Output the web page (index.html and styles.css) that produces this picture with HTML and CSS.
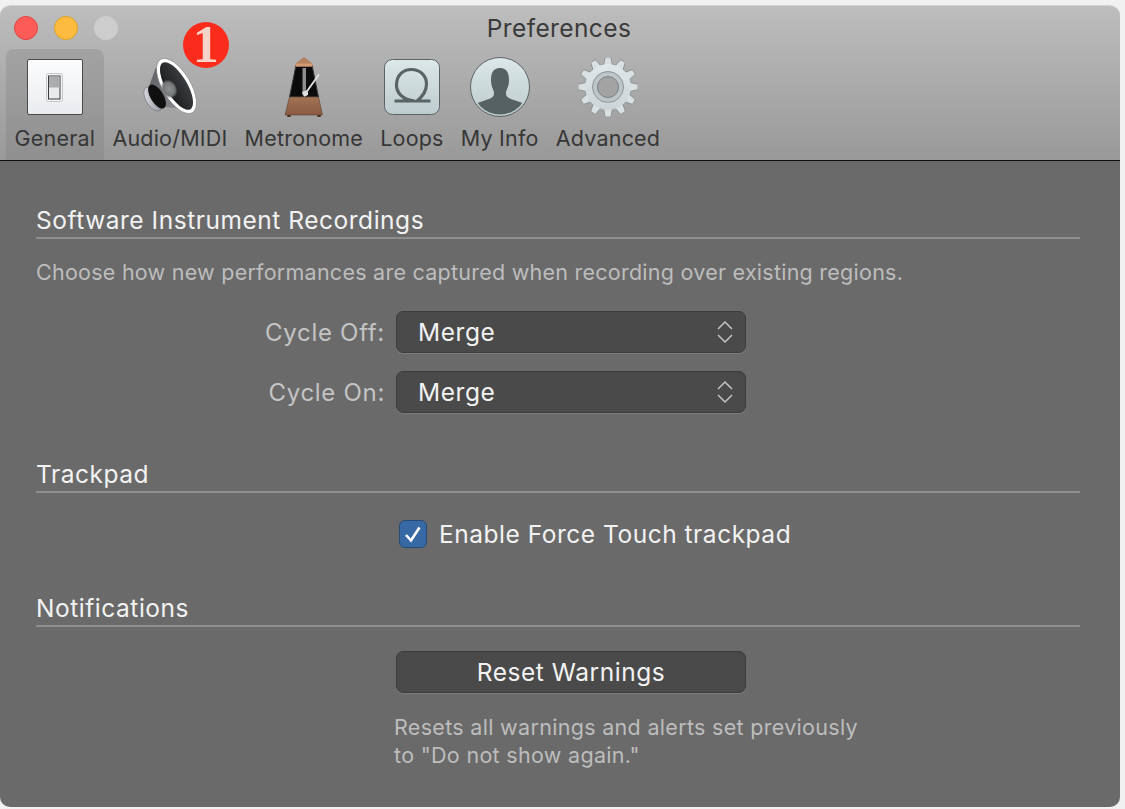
FILE: index.html
```html
<!DOCTYPE html>
<html lang="en">
<head>
    <meta charset="UTF-8">
    <title>Preferences</title>
    <link rel="stylesheet" href="styles.css">
</head>
<body>
<div class="window">
    <div class="toolbar">
        <div class="titlebar">
            <div class="lights">
                <span class="light red"></span>
                <span class="light yellow"></span>
                <span class="light gray"></span>
            </div>
            <div class="title">Preferences</div>
        </div>
        <div class="tabs">
            <div class="tab chosen">
                <svg class="icon" width="60" height="60" viewBox="0 0 60 60">
                    <defs>
                        <linearGradient id="paper" x1="0" y1="0" x2="0" y2="1">
                            <stop offset="0" stop-color="#fbfcfd"/>
                            <stop offset="1" stop-color="#e9ecef"/>
                        </linearGradient>
                    </defs>
                    <rect x="2.5" y="2.5" width="55" height="55" rx="1.5" fill="url(#paper)" stroke="#4a4a4a"/>
                    <rect x="21.5" y="16.5" width="16" height="28" rx="2" fill="#f4f4f4" stroke="#c4c6c8"/>
                    <rect x="23.5" y="19" width="11.500" height="23" fill="#e9eaeb" stroke="#3a3a3a"/>
                    <rect x="24" y="19.5" width="10.500" height="11" fill="#a9adad"/>
                </svg>
                <span class="tab-label">General</span>
            </div>
            <div class="tab">
                <svg class="icon" width="60" height="60" viewBox="0 0 60 60">
                    <defs>
                        <linearGradient id="magnet" x1="0" y1="0" x2="1" y2="1">
                            <stop offset="0" stop-color="#e6e7ee"/>
                            <stop offset="1" stop-color="#7f808a"/>
                        </linearGradient>
                        <linearGradient id="back" x1="0" y1="0" x2="1" y2="1">
                            <stop offset="0" stop-color="#5e5f64"/>
                            <stop offset="1" stop-color="#8b8c92"/>
                        </linearGradient>
                        <linearGradient id="cone" x1="0" y1="0" x2="1" y2="0">
                            <stop offset="0" stop-color="#1c1d1f"/>
                            <stop offset="1" stop-color="#3a3d40"/>
                        </linearGradient>
                        <radialGradient id="cap" cx="0.5" cy="0.5" r="0.5">
                            <stop offset="0" stop-color="#8f9393"/>
                            <stop offset="0.7" stop-color="#727677"/>
                            <stop offset="1" stop-color="#727677" stop-opacity="0"/>
                        </radialGradient>
                    </defs>
                    <g transform="translate(1.500 0)">
                        <path d="M14.500 10 L8 28 L24 50 L41 52 Z" fill="url(#back)"/>
                        <ellipse cx="11.500" cy="42" rx="7" ry="13.500" transform="rotate(-31 11.500 42)" fill="url(#magnet)" stroke="#66666c" stroke-width="0.5"/>
                        <ellipse cx="15.500" cy="39.500" rx="6.500" ry="13.500" transform="rotate(-31 15.500 39.500)" fill="#101011"/>
                        <ellipse cx="35" cy="29" rx="14" ry="31" transform="rotate(-31 35 29)" fill="#fff" stroke="#77787a" stroke-width="0.5"/>
                        <ellipse cx="35" cy="29" rx="10.500" ry="27" transform="rotate(-31 35 29)" fill="url(#cone)"/>
                        <ellipse cx="27.500" cy="32" rx="8" ry="10" transform="rotate(-31 27.500 32)" fill="url(#cap)"/>
                    </g>
                </svg>
                <span class="tab-label">Audio/MIDI</span>
                <span class="badge">1</span>
            </div>
            <div class="tab">
                <svg class="icon" width="60" height="60" viewBox="0 0 60 60">
                    <defs>
                        <linearGradient id="wood" x1="0" y1="0" x2="0" y2="1">
                            <stop offset="0" stop-color="#a37355"/>
                            <stop offset="1" stop-color="#8a5a42"/>
                        </linearGradient>
                    </defs>
                    <path d="M22 8 L38 8 L44.500 40 L15.500 40 Z" fill="#0b0b0b" stroke="#3b3b3b" stroke-width="1"/>
                    <path d="M21 7 L30 0 L39 7 L38 9.500 L22 9.500 Z" fill="#b5805f"/>
                    <path d="M21 6.500 L39 6.500 L38 9.500 L22 9.500 Z" fill="#d39a75"/>
                    <rect x="28.500" y="11" width="3.500" height="27" fill="#8e8e8e"/>
                    <path d="M31 37 L45 17.500" stroke="#e4e4e4" stroke-width="1.800"/>
                    <path d="M28 35 L34 33 L34 38 L30 40 Z" fill="#e0e0e0"/>
                    <path d="M15.500 40 L44.500 40 L48.500 58 L11 58 Z" fill="url(#wood)" stroke="#5d4030" stroke-width="0.6"/>
                    <rect x="13" y="58" width="4" height="2" rx="1" fill="#4a3428"/>
                    <rect x="43" y="58" width="4" height="2" rx="1" fill="#4a3428"/>
                </svg>
                <span class="tab-label">Metronome</span>
            </div>
            <div class="tab">
                <svg class="icon" width="60" height="60" viewBox="0 0 60 60">
                    <defs>
                        <linearGradient id="tile" x1="0" y1="0" x2="0" y2="1">
                            <stop offset="0" stop-color="#dce8ea"/>
                            <stop offset="1" stop-color="#bccbcd"/>
                        </linearGradient>
                    </defs>
                    <rect x="2.500" y="2.500" width="55" height="55" rx="8" fill="url(#tile)" stroke="#5c6264"/>
                    <path d="M12.500 44 H33 C20 43 14 35 14.500 27 C15 18 21 12.500 29.500 12.500 C38 12.500 44.500 18.500 44.500 27 C44.500 34 40 40 35 44 H48.500" fill="none" stroke="#596466" stroke-width="3.200"/>
                </svg>
                <span class="tab-label">Loops</span>
            </div>
            <div class="tab">
                <svg class="icon" width="60" height="60" viewBox="0 0 60 60">
                    <defs>
                        <clipPath id="disc"><circle cx="30" cy="30" r="27.500"/></clipPath>
                    </defs>
                    <circle cx="30" cy="30" r="29.500" fill="url(#tile)" stroke="#5c6264"/>
                    <path clip-path="url(#disc)" d="M30 11 C37 11 39 16 39 23 C39 30 36 33 36 36 C36 40 38 41 44 43 C50 45 54 46 56 50 L50 60 L10 60 L4 50 C6 46 10 45 16 43 C22 41 24 40 24 36 C24 33 21 30 21 23 C21 16 23 11 30 11 Z" fill="#566162"/>
                </svg>
                <span class="tab-label">My Info</span>
            </div>
            <div class="tab">
                <svg class="icon" width="60" height="60" viewBox="0 0 60 60">
                    <defs>
                        <linearGradient id="steel" x1="0" y1="0" x2="0" y2="60" gradientUnits="userSpaceOnUse">
                            <stop offset="0" stop-color="#e4eaec"/>
                            <stop offset="1" stop-color="#c8d1d4"/>
                        </linearGradient>
                        <path id="tooth" d="M25.500 9 L27 1 Q27.200 0 28 0 H32 Q32.800 0 33 1 L34.500 9 Z" fill="#d8e0e2" stroke="#878e90" stroke-width="0.8"/>
                    </defs>
                    <circle cx="30" cy="30" r="23.400" fill="#878e90"/>
                    <use href="#tooth"/>
                    <use href="#tooth" transform="rotate(30 30 30)"/>
                    <use href="#tooth" transform="rotate(60 30 30)"/>
                    <use href="#tooth" transform="rotate(90 30 30)"/>
                    <use href="#tooth" transform="rotate(120 30 30)"/>
                    <use href="#tooth" transform="rotate(150 30 30)"/>
                    <use href="#tooth" transform="rotate(180 30 30)"/>
                    <use href="#tooth" transform="rotate(210 30 30)"/>
                    <use href="#tooth" transform="rotate(240 30 30)"/>
                    <use href="#tooth" transform="rotate(270 30 30)"/>
                    <use href="#tooth" transform="rotate(300 30 30)"/>
                    <use href="#tooth" transform="rotate(330 30 30)"/>
                    <circle cx="30" cy="30" r="23" fill="url(#steel)"/>
                    <circle cx="30" cy="30" r="15.500" fill="#bcc5c8" stroke="#8f9699" stroke-width="1"/>
                    <circle cx="30" cy="30" r="10.500" fill="#a3a3a3" stroke="#7b8183" stroke-width="1"/>
                </svg>
                <span class="tab-label">Advanced</span>
            </div>
        </div>
    </div>

    <div class="content">
        <div class="section recordings">
            <div class="section-head">Software Instrument Recordings</div>
            <p class="desc">Choose how new performances are captured when recording over existing regions.</p>
            <div class="form-row first">
                <label class="form-label">Cycle Off:</label>
                <div class="select">
                    <span>Merge</span>
                    <svg width="18" height="26" viewBox="0 0 18 26"><path d="M2 10 L9 3 L16 10 M2 16 L9 23 L16 16" fill="none" stroke="#c4c4c4" stroke-width="1.500"/></svg>
                </div>
            </div>
            <div class="form-row">
                <label class="form-label">Cycle On:</label>
                <div class="select">
                    <span>Merge</span>
                    <svg width="18" height="26" viewBox="0 0 18 26"><path d="M2 10 L9 3 L16 10 M2 16 L9 23 L16 16" fill="none" stroke="#c4c4c4" stroke-width="1.500"/></svg>
                </div>
            </div>
        </div>

        <div class="section trackpad">
            <div class="section-head">Trackpad</div>
            <div class="check-row">
                <span class="checkbox">
                    <svg width="28" height="28" viewBox="0 0 28 28"><path d="M7 15 L12 20.500 L20.500 7.500" fill="none" stroke="#fff" stroke-width="2.600"/></svg>
                </span>
                <span class="check-label">Enable Force Touch trackpad</span>
            </div>
        </div>

        <div class="section notifications">
            <div class="section-head">Notifications</div>
            <div class="button">Reset Warnings</div>
            <p class="help">Resets all warnings and alerts set previously<br>to "Do not show again."</p>
        </div>
    </div>
</div>
</body>
</html>
```

FILE: styles.css
```css
* {
    padding: 0;
    margin: 0;
    box-sizing: border-box;
}

body {
    background-color: #f1f1f1;
    font-family: Inter, "Liberation Sans", sans-serif;
}

.window {
    width: 1120px;
    height: 802px;
    margin-top: 5px;
    border-radius: 10px;
    overflow: hidden;
    display: flex;
    flex-direction: column;
    border-top: 1px solid #d4d4d4;
}

.toolbar {
    height: 155px;
    background: linear-gradient(#bdbdbd, #999999);
    border-bottom: 1px solid #111;
    display: flex;
    flex-direction: column;
}

.titlebar {
    display: grid;
    grid-template-columns: 1fr auto 1fr;
    align-items: center;
    height: 43px;
    padding: 0 16px 0 14px;
}

.lights {
    display: flex;
    gap: 16px;
}

.light {
    width: 24px;
    height: 24px;
    border-radius: 50%;
}

.red {
    background-color: #fc5b57;
    border: 1px solid #e0443e;
}

.yellow {
    background-color: #fdbc40;
    border: 1px solid #dea123;
}

.gray {
    background-color: #cdcdcd;
}

.title {
    font-size: 24.500px;
    letter-spacing: 0.4px;
    color: #3a3a3a;
}

.tabs {
    display: flex;
    flex: 1;
    padding-left: 6px;
}

.tab {
    position: relative;
    display: flex;
    flex-direction: column;
    align-items: center;
    padding: 8px 8.600px 0;
}

.tab.chosen {
    background: linear-gradient(#a3a3a3, #8f8f8f);
    border-radius: 8px 8px 0 0;
}

.icon {
    display: block;
}

.tab-label {
    margin-top: 7px;
    font-size: 21.500px;
    letter-spacing: 0.2px;
    line-height: 28px;
    color: #363636;
    white-space: nowrap;
}

.badge {
    position: absolute;
    top: -27px;
    left: 79px;
    width: 46px;
    height: 46px;
    border-radius: 50%;
    background-color: #fb2c1b;
    color: #f6d4c8;
    font-family: "Liberation Serif", serif;
    font-weight: bold;
    font-size: 52px;
    line-height: 46px;
    text-align: center;
}

.content {
    flex: 1;
    background-color: #6a6a6a;
    padding: 0 40px 0 36px;
}

.section-head {
    font-size: 24.500px;
    letter-spacing: 0.53px;
    line-height: 28px;
    color: #f2f2f2;
    padding-bottom: 3px;
    border-bottom: 2px solid #8e8e8e;
}

.recordings {
    padding-top: 45px;
}

.trackpad {
    padding-top: 47px;
}

.notifications {
    padding-top: 45px;
}

.desc {
    margin-top: 19px;
    font-size: 21.500px;
    letter-spacing: 0.25px;
    line-height: 28px;
    color: #bdbdbd;
}

.form-row {
    display: grid;
    grid-template-columns: 349px 350px;
    column-gap: 11px;
    align-items: center;
    margin-top: 18px;
}

.form-row.first {
    margin-top: 25px;
}

.form-label {
    text-align: right;
    font-size: 24px;
    letter-spacing: 0.7px;
    color: #c4c4c4;
}

.select, .button {
    width: 350px;
    height: 42px;
    background-color: #4a4a4a;
    border: 1px solid #3c3c3c;
    border-radius: 7px;
    box-shadow: 0 1px 0 #7c7c7c;
    color: #f2f2f2;
    font-size: 24.500px;
    letter-spacing: 0.55px;
}

.select {
    display: flex;
    align-items: center;
    justify-content: space-between;
    padding: 0 11px 0 21px;
}

.check-row {
    display: flex;
    align-items: center;
    margin-top: 26px;
    padding-left: 363px;
}

.checkbox {
    width: 28px;
    height: 28px;
    background-color: #376aa5;
    border: 1px solid #244a78;
    border-radius: 6px;
    display: block;
    margin-right: 12px;
    line-height: 0;
}

.checkbox svg {
    margin: -1px;
}

.check-label {
    font-size: 24.500px;
    letter-spacing: 0.52px;
    color: #f2f2f2;
}

.button {
    margin: 24px 0 0 360px;
    text-align: center;
    line-height: 40px;
}

.help {
    margin: 20px 0 0 358px;
    font-size: 21.500px;
    letter-spacing: 0.31px;
    line-height: 28px;
    color: #bdbdbd;
}
```
